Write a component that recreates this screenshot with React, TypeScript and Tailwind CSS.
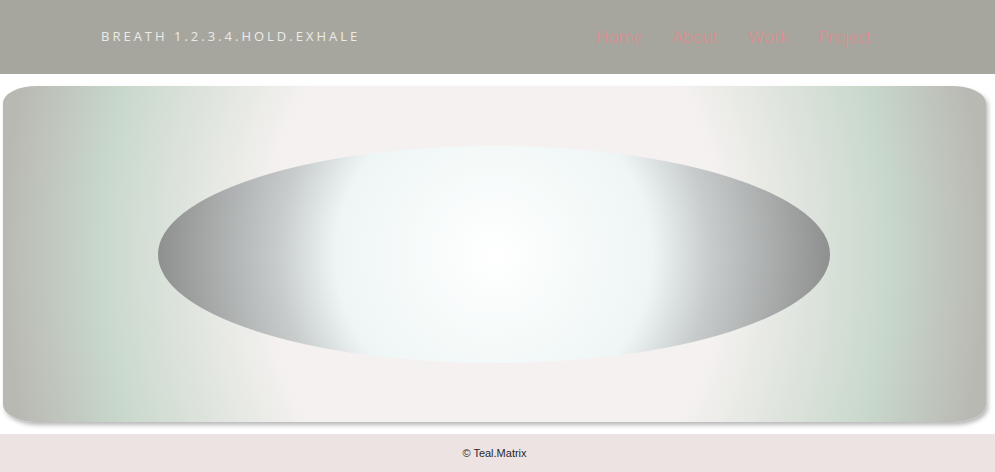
const navLinks = ['Home', 'About', 'Work', 'Project'];

const App = () => {
  return (
    <div className="min-h-screen bg-white font-['Open_Sans',sans-serif]">
      {/* Header */}
      <header className="h-[74px] w-full bg-[#a7a69e] flex items-center">
        <div className="pl-[101px] text-[13px] font-medium tracking-[3px] text-[#ebebe8] font-['Open_Sans',sans-serif]">
          BREATH 1.2.3.4.HOLD.EXHALE
        </div>
        <nav className="ml-auto mr-[123px] flex items-center gap-[30px] -mt-[1px]">
          {navLinks.map((link) => (
            <a
              key={link}
              href="#"
              className="text-[17px] font-light text-[#e38a8d] font-['Open_Sans',sans-serif]"
            >
              {link}
            </a>
          ))}
        </nav>
      </header>

      {/* Breath card */}
      <main className="pt-3 pb-3 pl-[3px]">
        <div className="h-[336px] w-[983px] rounded-[34px/17px] shadow-[2px_3px_4px_rgba(0,0,0,0.28)] bg-[radial-gradient(ellipse_491px_620px_at_center,#f5f1f0_0%,#f5f1f0_46%,#c9d8cc_80%,#b9b9b3_100%)] flex items-center justify-center">
          <div className="h-[217px] w-[672px] -translate-x-[1px] rounded-[50%] bg-[radial-gradient(circle_336px_at_center,#ffffff_0%,#eef6f5_47%,#c8cccc_64%,#8e908f_100%)]" />
        </div>
      </main>

      {/* Footer */}
      <footer className="h-[38px] bg-[#ede3e2] flex items-center justify-center">
        <p className="-ml-[6px] text-[11px] text-[#2a2a2a] font-['Liberation_Sans',Arial,sans-serif]">© Teal.Matrix</p>
      </footer>
    </div>
  );
};

export default App;
